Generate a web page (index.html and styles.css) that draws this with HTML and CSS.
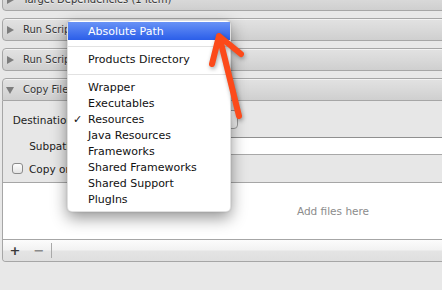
FILE: index.html
```html
<!DOCTYPE html>
<html>
<head>
<meta charset="utf-8">
<link rel="stylesheet" href="styles.css">
</head>
<body>
<div class="window">
  <div class="phases">
    <div class="phase">
      <div class="bar"><span class="twisty"><span class="tri-right"></span></span><span class="title">Target Dependencies (1 item)</span></div>
    </div>
    <div class="phase">
      <div class="bar"><span class="twisty"><span class="tri-right"></span></span><span class="title">Run Script</span></div>
    </div>
    <div class="phase">
      <div class="bar"><span class="twisty"><span class="tri-right"></span></span><span class="title">Run Script</span></div>
    </div>
    <div class="phase open">
      <div class="bar"><span class="twisty"><span class="tri-down"></span></span><span class="title">Copy Files (1 item)</span></div>
      <div class="body">
        <div class="form">
          <span class="label">Destination</span>
          <div class="popup">Resources</div>
          <span class="label">Subpath</span>
          <div class="field"></div>
        </div>
        <div class="check"><span class="box"></span><span class="clabel">Copy only when installing</span></div>
        <div class="files">Add files here</div>
        <div class="tools"><span class="tool plus">+</span><span class="tool minus">−</span><span class="vsep"></span></div>
      </div>
    </div>
  </div>

  <div class="menu">
    <div class="item hl">Absolute Path</div>
    <div class="sep"></div>
    <div class="item">Products Directory</div>
    <div class="sep"></div>
    <div class="item">Wrapper</div>
    <div class="item">Executables</div>
    <div class="item checked"><span class="mark">✓</span>Resources</div>
    <div class="item">Java Resources</div>
    <div class="item">Frameworks</div>
    <div class="item">Shared Frameworks</div>
    <div class="item">Shared Support</div>
    <div class="item">PlugIns</div>
  </div>

  <svg class="arrow" width="442" height="290" viewBox="0 0 442 290">
    <path d="M220 39 L239 116" />
    <path d="M241 54 L219 36 L212 64" />
  </svg>
</div>
</body>
</html>
```

FILE: styles.css
```css
html, body {
  margin: 0;
  padding: 0;
  overflow: hidden;
}
body {
  background: #e8e8e8;
  font-family: "DejaVu Sans", "Liberation Sans", sans-serif;
}
.window {
  position: relative;
  width: 442px;
  height: 290px;
  overflow: hidden;
  background: #e8e8e8;
}
.phases {
  display: flex;
  flex-direction: column;
  gap: 7px;
  margin-top: -12px;
  padding-left: 2px;
  width: 662px;
}
.bar {
  box-sizing: border-box;
  height: 23px;
  border: 1px solid #a6a6a6;
  border-radius: 4px;
  background: linear-gradient(#e2e2e2, #d9d9d9 50%, #cfcfcf);
  box-shadow: inset 0 1px 0 rgba(255,255,255,0.55);
  display: flex;
  align-items: center;
}
.twisty {
  width: 20px;
  display: flex;
  align-items: center;
}
.tri-right {
  width: 0;
  height: 0;
  margin-left: 4px;
  border-left: 7px solid #7d7d7d;
  border-top: 4.5px solid transparent;
  border-bottom: 4.5px solid transparent;
}
.tri-down {
  width: 0;
  height: 0;
  margin-left: 3px;
  margin-top: 1px;
  border-top: 7px solid #7d7d7d;
  border-left: 4.5px solid transparent;
  border-right: 4.5px solid transparent;
}
.title {
  font-size: 10px;
  color: #333;
  text-shadow: 0 1px 0 rgba(255,255,255,0.6);
  white-space: nowrap;
}
.open .bar {
  border-radius: 4px 4px 0 0;
  border-bottom-color: #a6a6a6;
}
.body {
  box-sizing: border-box;
  border: 1px solid #a6a6a6;
  border-top: none;
  border-radius: 0 0 4px 4px;
  background: #e7e7e7;
  overflow: hidden;
}
.form {
  display: grid;
  grid-template-columns: 70px 1fr;
  column-gap: 6px;
  row-gap: 8px;
  align-items: center;
  padding-top: 9px;
}
.label {
  font-size: 10.5px;
  color: #222;
  text-align: right;
  white-space: nowrap;
}
.popup {
  box-sizing: border-box;
  width: 159px;
  height: 19px;
  border: 1px solid #9a9a9a;
  border-radius: 4px;
  background: linear-gradient(#ffffff, #ececec);
  font-size: 10.5px;
  line-height: 17px;
  padding-left: 8px;
  color: #222;
}
.field {
  box-sizing: border-box;
  height: 18px;
  border: 1px solid #a8a8a8;
  border-top-color: #8f8f8f;
  background: #fff;
}
.check {
  display: flex;
  align-items: center;
  gap: 6px;
  height: 11px;
  padding: 8px 0 8px 9px;
}
.box {
  box-sizing: border-box;
  width: 11px;
  height: 11px;
  border: 1px solid #8a8a8a;
  border-radius: 3px;
  background: linear-gradient(#fdfdfd, #e4e4e4);
}
.clabel {
  font-size: 10.5px;
  color: #222;
  white-space: nowrap;
}
.files {
  height: 56px;
  border-top: 1px solid #a6a6a6;
  border-bottom: 1px solid #a6a6a6;
  background: #fff;
  display: flex;
  align-items: center;
  justify-content: center;
  font-size: 10.5px;
  color: #8c8c8c;
}
.tools {
  height: 21px;
  display: flex;
  align-items: center;
  background: linear-gradient(#fcfcfc, #f2f2f2 48%, #e4e4e4 52%, #dfdfdf);
}
.tool {
  width: 24px;
  text-align: center;
  font-size: 13px;
  line-height: 21px;
  font-weight: bold;
}
.plus { color: #3a3a3a; }
.minus { color: #8a8a8a; }
.vsep {
  width: 1px;
  height: 15px;
  margin-left: 0;
  background: #a9a9a9;
}
.menu {
  position: absolute;
  left: 67px;
  top: 20px;
  box-sizing: border-box;
  width: 164px;
  padding: 2px 0 3px;
  background: #fff;
  border: 1px solid rgba(0,0,0,0.12);
  border-radius: 5px;
  box-shadow: 0 6px 16px rgba(0,0,0,0.42), 0 0 2px rgba(0,0,0,0.15);
}
.item {
  position: relative;
  height: 16px;
  line-height: 16px;
  padding-left: 20px;
  font-size: 11px;
  color: #111;
  white-space: nowrap;
}
.item.hl {
  height: 18px;
  line-height: 19px;
  margin-top: -1px;
  color: #fff;
  background: linear-gradient(#6892f6, #2b5ee9);
}
.mark {
  position: absolute;
  left: 5px;
  top: 0;
  font-size: 11px;
}
.sep {
  height: 12px;
  background: linear-gradient(transparent 6px, #e2e2e2 6px, #e2e2e2 7px, transparent 7px);
}
.arrow {
  position: absolute;
  left: 0;
  top: 0;
  pointer-events: none;
  filter: drop-shadow(1px 2px 2px rgba(0,0,0,0.35));
}
.arrow path {
  fill: none;
  stroke: #fc4a1a;
  stroke-width: 6;
  stroke-linecap: round;
  stroke-linejoin: round;
}
```
